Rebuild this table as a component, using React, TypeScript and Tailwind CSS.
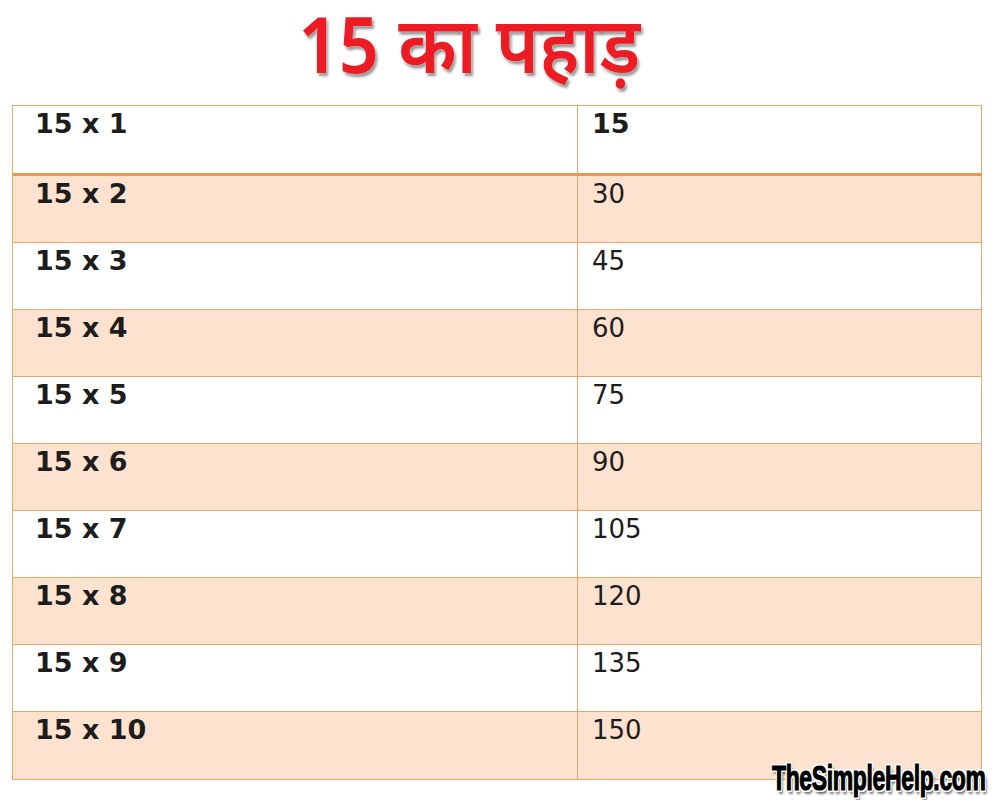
import React from "react";

const rows = Array.from({ length: 10 }, (_, i) => i + 1);

export default function App() {
  return (
    <div className="relative w-[1000px] h-[800px] bg-white overflow-hidden">
      <div className="h-[105px] flex justify-center">
        <h1
          className="ml-[-62px] mt-[6px] text-[78px] leading-[96px] font-semibold text-[#ec1c24] scale-x-[0.93] [text-shadow:0_0_2px_#fff,2px_3px_3px_rgba(0,0,0,0.45)]"
          style={{ fontFamily: '"Noto Sans Devanagari", "Noto Sans", "Lohit Devanagari", "FreeSans", sans-serif' }}
        >
          15 का पहाड़
        </h1>
      </div>
      <div className="ml-[12px] w-[970px] border border-[#e8a86c] font-['DejaVu_Sans',sans-serif] text-[26px] text-[#1d1d1d]">
        {rows.map((n) => (
          <div
            key={n}
            className={`grid grid-cols-[565px_1fr] ${
              n === 1
                ? "h-[70px] border-b-[3px] border-[#ee9450]"
                : n === 10
                ? "h-[67px]"
                : "h-[67px] border-b border-[#e8a86c]"
            } ${n % 2 === 0 ? "bg-[#fde2cf]" : "bg-white"}`}
          >
            <div className="border-r border-[#e8a86c] pl-[22px] font-bold text-[27px] leading-[34px] pt-[1px]">
              15 x {n}
            </div>
            <div className={`pl-[14px] leading-[34px] pt-[1px] ${n === 1 ? "font-bold text-[27px]" : ""}`}>{15 * n}</div>
          </div>
        ))}
      </div>
      <div
        className="absolute left-[772px] top-[757px] origin-left scale-x-[0.655] whitespace-nowrap text-[35px] leading-[42px] font-bold text-black tracking-[-0.5px] [-webkit-text-stroke:1.2px_#000] [text-shadow:-2px_-2px_0_#fff,2px_-2px_0_#fff,-2px_2px_0_#fff,2px_2px_0_#fff,0_-2px_0_#fff,0_2px_0_#fff,-2px_0_0_#fff,2px_0_0_#fff,3px_4px_3px_rgba(0,0,0,0.6)]"
        style={{ fontFamily: '"Liberation Sans", sans-serif' }}
      >
        TheSimpleHelp.com
      </div>
    </div>
  );
}
